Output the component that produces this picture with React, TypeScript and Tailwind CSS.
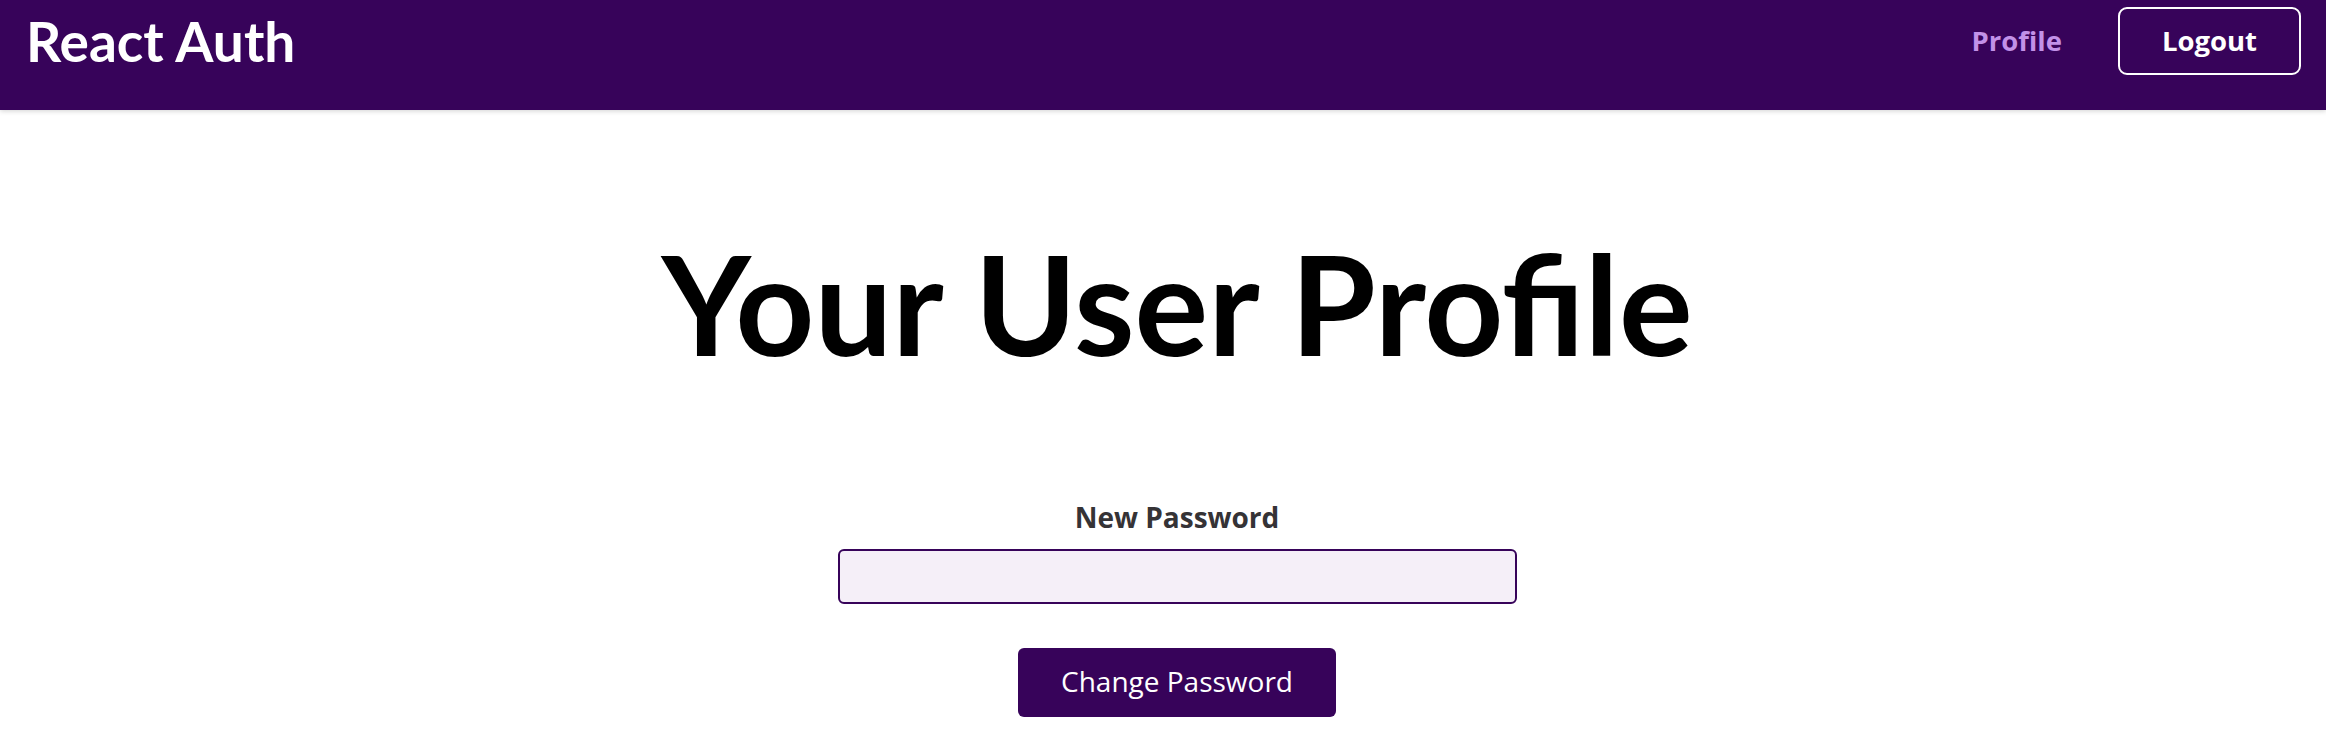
import React, { useState } from 'react';

const lato = "font-['Lato',sans-serif]";
const openSans = "font-['Open_Sans',sans-serif]";

const Header: React.FC = () => (
  <header className="h-[110px] w-full bg-[#37035a] shadow-[0_1px_5px_rgba(0,0,0,0.18)] flex items-center justify-between pl-[26px] pr-[25px] pb-[28px]">
    <div className={`${lato} text-[55px] leading-none font-bold text-white`}>React Auth</div>
    <nav className={`${openSans} flex items-center gap-[56px]`}>
      <a href="#" className="text-[27.5px] font-bold text-[#c291e8]">
        Profile
      </a>
      <button className="h-[68px] w-[183px] rounded-[9px] border-2 border-white text-[27.5px] font-bold text-white">
        Logout
      </button>
    </nav>
  </header>
);

const ProfileForm: React.FC = () => {
  const [password, setPassword] = useState('');

  return (
    <form
      onSubmit={(e) => e.preventDefault()}
      className={`${openSans} flex flex-col items-center w-[679px]`}
    >
      <label htmlFor="new-password" className="text-[28px] leading-[42px] font-bold text-[#353336]">
        New Password
      </label>
      <input
        id="new-password"
        type="password"
        value={password}
        onChange={(e) => setPassword(e.target.value)}
        className="mt-[11px] h-[55px] w-full rounded-[6px] border-2 border-[#37035a] bg-[#f5eff8] px-2 text-[28px] outline-none"
      />
      <button
        type="submit"
        className="mt-[44px] h-[69px] w-[318px] rounded-[6px] bg-[#37035a] pb-[3px] text-[28px] leading-[42px] text-white"
      >
        Change Password
      </button>
    </form>
  );
};

export default function App() {
  return (
    <div className="min-h-[748px] w-full bg-white">
      <Header />
      <main className="flex flex-col items-center pl-[28px]">
        <h1 className={`${lato} mt-[124px] text-[138px] leading-none font-bold text-black`}>Your User Profile</h1>
        <div className="mt-[124px]">
          <ProfileForm />
        </div>
      </main>
    </div>
  );
}
